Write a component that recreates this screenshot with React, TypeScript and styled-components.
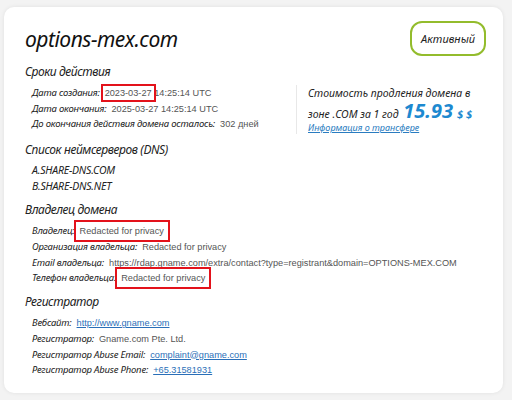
import React from 'react'
import styled, { createGlobalStyle } from 'styled-components'

const GlobalStyle = createGlobalStyle`
  html, body {
    margin: 0;
    padding: 0;
    background: #f3f3f3;
  }
  body {
    font-family: 'Noto Sans', 'Open Sans', sans-serif;
    color: #222;
  }
`

type Row = {
  label: string
  value: string
  href?: boolean
  mark?: 'small' | 'big'
  rest?: string
}

const dates: Row[] = [
  { label: 'Дата создания:', value: '2023-03-27', mark: 'small', rest: ' 14:25:14 UTC' },
  { label: 'Дата окончания:', value: '2025-03-27 14:25:14 UTC' },
  { label: 'До окончания действия домена осталось:', value: '302 дней' },
]

const owner: Row[] = [
  { label: 'Владелец:', value: 'Redacted for privacy', mark: 'big' },
  { label: 'Организация владельца:', value: 'Redacted for privacy' },
  {
    label: 'Email владельца:',
    value: 'https://rdap.gname.com/extra/contact?type=registrant&domain=OPTIONS-MEX.COM',
  },
  { label: 'Телефон владельца:', value: 'Redacted for privacy', mark: 'big' },
]

const registrar: Row[] = [
  { label: 'Вебсайт:', value: 'http://www.gname.com', href: true },
  { label: 'Регистратор:', value: 'Gname.com Pte. Ltd.' },
  { label: 'Регистратор Abuse Email:', value: 'complaint@gname.com', href: true },
  { label: 'Регистратор Abuse Phone:', value: '+65.31581931', href: true },
]

const InfoRows: React.FC<{ rows: Row[] }> = ({ rows }) => (
  <Rows>
    {rows.map((r) => (
      <Line key={r.label}>
        <Label>{r.label}</Label>
        {r.href ? (
          <Link href="#">{r.value}</Link>
        ) : r.mark ? (
          <Value>
            <Marked $size={r.mark}>{r.value}</Marked>
            {r.rest}
          </Value>
        ) : (
          <Value>{r.value}</Value>
        )}
      </Line>
    ))}
  </Rows>
)

const App: React.FC = () => {
  return (
    <>
      <GlobalStyle />
      <Card>
        <Header>
          <Domain>options-mex.com</Domain>
          <Status>Активный</Status>
        </Header>

        <Heading>Сроки действия</Heading>
        <DatesBlock>
          <InfoRows rows={dates} />
          <Divider />
          <Price>
            <PriceText>Стоимость продления домена в</PriceText>
            <PriceText $tall>
              зоне .COM за 1 год <Amount>15.93</Amount>
              <Currency>$ $</Currency>
            </PriceText>
            <SmallLink href="#">Информация о трансфере</SmallLink>
          </Price>
        </DatesBlock>

        <Heading>Список неймсерверов (DNS)</Heading>
        <Rows $size={10.5}>
          <Label as="div">A.SHARE-DNS.COM</Label>
          <Label as="div">B.SHARE-DNS.NET</Label>
        </Rows>

        <Heading>Владелец домена</Heading>
        <InfoRows rows={owner} />

        <Heading>Регистратор</Heading>
        <InfoRows rows={registrar} />
      </Card>
    </>
  )
}

const Card = styled.div`
  margin: 7px 9px 7px 4px;
  height: 386px;
  box-sizing: border-box;
  background: #fff;
  border-radius: 10px;
  box-shadow: 0 0 4px rgba(0, 0, 0, 0.08);
  padding: 14px 17px 0 21px;
`

const Header = styled.div`
  display: flex;
  justify-content: space-between;
  align-items: center;
  margin-bottom: 3px;
`

const Domain = styled.h1`
  margin: 0;
  font-size: 21px;
  line-height: 28px;
  letter-spacing: -0.5px;
  font-weight: 400;
  font-style: italic;
  color: #111;
`

const Status = styled.div`
  width: 76px;
  height: 35px;
  box-sizing: border-box;
  border: 2px solid #93bc2c;
  border-radius: 12px;
  display: flex;
  align-items: center;
  justify-content: center;
  font-size: 11px;
  font-style: italic;
  color: #222;
`

const Heading = styled.h2`
  margin: 6px 0 3px 0;
  font-size: 12px;
  line-height: 20px;
  letter-spacing: -0.4px;
  font-weight: 400;
  font-style: italic;
  color: #222;
`

const Rows = styled.div<{ $size?: number }>`
  padding-left: 7px;
  font-size: ${(p) => p.$size ?? 9.5}px;
  line-height: 15.7px;
`

const Line = styled.div`
  height: 15.7px;
  line-height: 15.7px;
  white-space: nowrap;
`

const Label = styled.span`
  font-style: italic;
  letter-spacing: -0.2px;
  color: #222;
  margin-right: 5px;
`

const Value = styled.span`
  font-family: 'Liberation Sans', Arial, sans-serif;
  font-size: 9.2px;
  line-height: 10px;
  color: #555;
`

const Marked = styled.span<{ $size: 'small' | 'big' }>`
  position: relative;
  &::after {
    content: '';
    position: absolute;
    inset: ${(p) => (p.$size === 'big' ? '-6px -6px -6px -6px' : '-4px -4px -4px -4px')};
    border: 2px solid #e3121b;
  }
`

const Link = styled(Value).attrs({ as: 'a' })`
  color: #2a6fb8;
  text-decoration: underline;
`

const DatesBlock = styled.div`
  display: flex;
`

const Divider = styled.div`
  width: 1px;
  background: #e8e8e8;
  margin: 0 11px 0 auto;
`

const Price = styled.div`
  width: 178px;
  font-style: italic;
`

const PriceText = styled.div<{ $tall?: boolean }>`
  height: ${(p) => (p.$tall ? 20 : 16)}px;
  font-size: 10.5px;
  line-height: ${(p) => (p.$tall ? 20 : 16)}px;
  color: #222;
  white-space: nowrap;
`

const Amount = styled.span`
  font-size: 20px;
  line-height: 20px;
  font-weight: 700;
  color: #1d89d0;
  margin-left: 2px;
`

const Currency = styled.span`
  font-size: 11px;
  font-weight: 700;
  color: #1d89d0;
  margin-left: 4px;
`

const SmallLink = styled.a`
  display: block;
  font-size: 9px;
  line-height: 13px;
  color: #2a7cc0;
  text-decoration: underline;
`

export default App
